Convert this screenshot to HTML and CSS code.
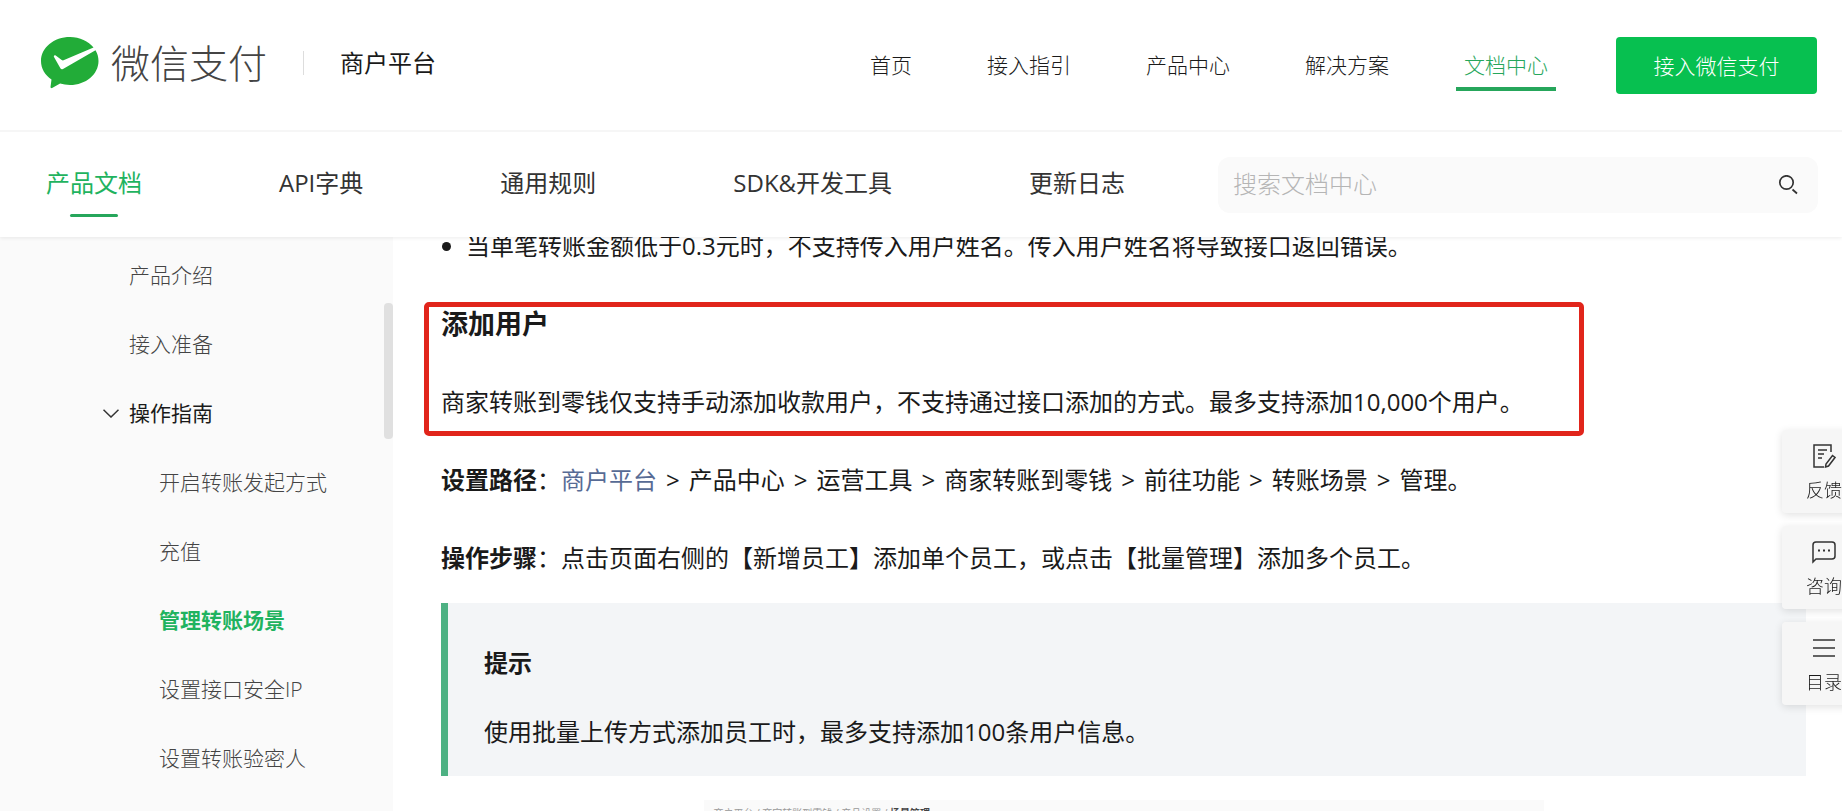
FILE: index.html
```html
<!DOCTYPE html>
<html lang="zh-CN">
<head>
<meta charset="UTF-8">
<title>管理转账场景 - 微信支付商户平台</title>
<link rel="stylesheet" href="styles.css">
</head>
<body>

<header class="header">
  <div class="topbar">
    <div class="brand">
      <a class="logo" href="#">
        <svg width="58" height="52" viewBox="0 0 58 52">
          <path fill="#22ac38" d="M29 0C13 0 0 10.600 0 24c0 7.500 4 14 10.500 18.500L9.500 50c0 1 .8 1.400 1.600 1l8-4.400c3 .9 6.400 1.400 9.900 1.400 16 0 28.500-10.700 28.500-24 0-4-1.100-7.600-3-10.800L22 32c-1.200.7-2 .3-2.600-.8L13 20c-.6-1.500.6-2.300 1.700-1.500l6 4.500c.8.5 1.500.5 2.400.1L52.500 10.500C47.500 4.200 38.800 0 29 0z"/>
        </svg>
        <span class="logo-text">微信支付</span>
      </a>
      <span class="platform">商户平台</span>
    </div>
    <nav class="main-nav">
      <a href="#">首页</a>
      <a href="#">接入指引</a>
      <a href="#">产品中心</a>
      <a href="#">解决方案</a>
      <a href="#" class="active">文档中心</a>
    </nav>
    <button type="button" class="join-button">接入微信支付</button>
  </div>

  <div class="subbar">
    <nav class="doc-nav">
      <a href="#" class="active">产品文档</a>
      <a href="#">API字典</a>
      <a href="#">通用规则</a>
      <a href="#">SDK&amp;开发工具</a>
      <a href="#">更新日志</a>
    </nav>
    <form class="search">
      <input type="text" placeholder="搜索文档中心" aria-label="搜索文档中心">
      <button type="button" aria-label="搜索">
        <svg width="20" height="20" viewBox="0 0 20 20" fill="none" stroke="#333" stroke-width="1.700">
          <circle cx="8.500" cy="7.500" r="6.700"/>
          <path d="M14.500 14.500l4.500 4"/>
        </svg>
      </button>
    </form>
  </div>
</header>

<div class="page">
  <aside class="sidebar">
    <ul class="menu">
      <li><a href="#">产品介绍</a></li>
      <li><a href="#">接入准备</a></li>
      <li>
        <a href="#" class="open">
          <svg width="16" height="9" viewBox="0 0 16 9" fill="none" stroke="#333" stroke-width="1.500">
            <path d="M.5.7L8 8 15.500.7"/>
          </svg>
          操作指南
        </a>
        <ul class="submenu">
          <li><a href="#">开启转账发起方式</a></li>
          <li><a href="#">充值</a></li>
          <li><a href="#" class="current">管理转账场景</a></li>
          <li><a href="#">设置接口安全IP</a></li>
          <li><a href="#">设置转账验密人</a></li>
        </ul>
      </li>
    </ul>
    <div class="scrollbar"></div>
  </aside>

  <main class="content">
    <ul class="notes">
      <li>当单笔转账金额低于0.3元时，不支持传入用户姓名。传入用户姓名将导致接口返回错误。</li>
    </ul>

    <section class="marked">
      <h2>添加用户</h2>
      <p>商家转账到零钱仅支持手动添加收款用户，不支持通过接口添加的方式。最多支持添加10,000个用户。</p>
    </section>

    <p><strong>设置路径</strong>：<a href="#">商户平台</a><i>&gt;</i>产品中心<i>&gt;</i>运营工具<i>&gt;</i>商家转账到零钱<i>&gt;</i>前往功能<i>&gt;</i>转账场景<i>&gt;</i>管理。</p>
    <p><strong>操作步骤</strong>：点击页面右侧的【新增员工】添加单个员工，或点击【批量管理】添加多个员工。</p>

    <blockquote class="tip">
      <strong>提示</strong>
      <p>使用批量上传方式添加员工时，最多支持添加100条用户信息。</p>
    </blockquote>

    <div class="figure">
      <span>商户平台 / 商家转账到零钱 / 产品设置 / <b>场景管理</b></span>
    </div>
  </main>
</div>

<div class="float-tools">
  <button type="button">
    <svg width="24" height="24" viewBox="0 0 24 24" fill="none" stroke="#333" stroke-width="1.500">
      <path d="M19 8V1H2v22h10"/>
      <path d="M6 6h9M6 10h6M6 14h4"/>
      <path d="M20.500 11.500l2.500 2-6.500 8.500-3 1 .5-3z"/>
    </svg>
    反馈
  </button>
  <button type="button">
    <svg width="24" height="24" viewBox="0 0 24 24" fill="none" stroke="#333" stroke-width="1.500">
      <path d="M1 22V5q0-3 3-3h16q3 0 3 3v11q0 3-3 3H4z"/>
      <path stroke-width="2" d="M6 10.500h2M11 10.500h2M16 10.500h2"/>
    </svg>
    咨询
  </button>
  <button type="button">
    <svg width="24" height="24" viewBox="0 0 24 24" fill="none" stroke="#333" stroke-width="1.500">
      <path d="M1 4h22M1 12h22M1 20h22"/>
    </svg>
    目录
  </button>
</div>

</body>
</html>
```
FILE: styles.css
```css
*, *::before, *::after {
  box-sizing: border-box;
}

body {
  display: flex;
  flex-direction: column;
  height: 100vh;
  margin: 0;
  overflow: hidden;
  font-family: "Open Sans", "Noto Sans CJK SC", sans-serif;
  font-size: 24px;
  line-height: 42px;
  color: #1a1a1a;
  background: #fff;
}

a {
  color: inherit;
  text-decoration: none;
}

button, input {
  font-family: inherit;
  border: none;
}

ul {
  list-style: none;
  margin: 0;
  padding: 0;
}

/* header */
.header {
  position: relative;
  z-index: 2;
  background: #fff;
  box-shadow: 0 1px 4px rgba(0, 0, 0, 0.08);
}

.topbar {
  display: flex;
  align-items: center;
  height: 132px;
  padding: 0 25px 0 41px;
  border-bottom: 2px solid #f6f6f6;
}

.brand {
  display: flex;
  align-items: center;
  padding-bottom: 4px;
}

.logo {
  display: flex;
  align-items: center;
  gap: 12px;
}

.logo-text {
  font-size: 39px;
  font-weight: 300;
  color: #444;
}

.platform {
  display: flex;
  align-items: center;
  gap: 36px;
  margin-left: 36px;
}

.platform::before {
  content: "";
  width: 1px;
  height: 24px;
  background: #ddd;
}

.main-nav {
  display: flex;
  gap: 59px;
  margin-left: auto;
  font-size: 21px;
  font-weight: 300;
}

.main-nav a {
  position: relative;
  padding: 0 8px;
}

.main-nav .active {
  color: #26a65b;
}

.main-nav .active::after {
  content: "";
  position: absolute;
  left: 0;
  right: 0;
  bottom: -5px;
  height: 4px;
  background: #26a65b;
}

.join-button {
  width: 201px;
  height: 57px;
  margin-left: 60px;
  padding: 0;
  font-size: 21px;
  font-weight: 300;
  color: #fff;
  background: #07c050;
  border-radius: 4px;
}

.subbar {
  display: flex;
  align-items: center;
  justify-content: space-between;
  height: 105px;
  padding: 0 24px 0 46px;
}

.doc-nav {
  display: flex;
  gap: 137px;
  padding-bottom: 4px;
  color: #333;
}

.doc-nav a {
  position: relative;
}

.doc-nav .active {
  color: #1fb35f;
}

.doc-nav .active::after {
  content: "";
  position: absolute;
  left: 25%;
  bottom: -13px;
  width: 50%;
  height: 3px;
  background: #26a65b;
  border-radius: 2px;
}

.search {
  display: flex;
  align-items: center;
  width: 600px;
  height: 56px;
  padding: 0 20px 0 15px;
  background: #fafafa;
  border-radius: 12px;
}

.search input {
  flex: 1;
  padding: 0 0 2px;
  font-size: 24px;
  font-weight: 300;
  background: none;
  outline: none;
}

.search input::placeholder {
  color: #b5b5b5;
}

.search button {
  display: flex;
  padding: 0;
  background: none;
}

/* page */
.page {
  display: flex;
  flex: 1;
  min-height: 0;
}

.sidebar {
  position: relative;
  width: 393px;
  flex-shrink: 0;
  padding-top: 4px;
  overflow: hidden;
  background: #fafafa;
}

.menu {
  font-size: 21px;
  font-weight: 300;
  line-height: 69px;
  color: #444;
}

.menu a {
  display: flex;
  align-items: center;
  padding-left: 129px;
}

.menu .open {
  gap: 10px;
  padding-left: 103px;
  font-weight: 400;
  color: #1a1a1a;
}

.submenu a {
  padding-left: 159px;
}

.submenu .current {
  font-weight: bold;
  color: #1fb35f;
}

.scrollbar {
  position: absolute;
  top: 66px;
  right: 0;
  width: 9px;
  height: 136px;
  background: #e0e0e0;
  border-radius: 4px;
}

.content {
  flex: 1;
  padding: 0 36px 0 48px;
  overflow: hidden;
}

.notes {
  margin-top: -12px;
  padding-left: 25px;
  list-style: disc;
}

.content h2 {
  margin: 36px 0 0;
  font-size: 27px;
  line-height: 42px;
}

.content p {
  margin: 36px 0 0;
}

.content p a {
  color: #576b95;
}

.content p i {
  margin: 0 9px;
  font-style: normal;
}

.marked {
  position: relative;
}

.marked::before {
  content: "";
  position: absolute;
  top: -1px;
  bottom: -13px;
  left: -17px;
  width: 1160px;
  border: 5px solid #e1251b;
  border-radius: 5px;
}

.tip {
  margin: 24px 0 0;
  padding: 39px 36px 23px;
  background: #f3f5f7;
  border-left: 7px solid #4db183;
}

.tip p {
  margin-top: 27px;
}

.figure {
  width: 840px;
  height: 400px;
  margin: 24px auto 0;
  padding: 6px 10px;
  font-size: 10px;
  line-height: 14px;
  color: #999;
  background: #fafafa;
}

.figure b {
  color: #444;
}

/* tools on the right edge */
.float-tools {
  position: fixed;
  top: 430px;
  right: -24px;
  z-index: 3;
  display: flex;
  flex-direction: column;
  gap: 13px;
}

.float-tools button {
  display: flex;
  flex-direction: column;
  align-items: center;
  gap: 8px;
  width: 84px;
  height: 83px;
  padding: 14px 0 0;
  font-size: 18px;
  font-weight: 300;
  line-height: 28px;
  color: #1a1a1a;
  background: #f6f6f6;
  border-radius: 4px;
  box-shadow: 0 2px 8px rgba(0, 0, 0, 0.12);
}
```
